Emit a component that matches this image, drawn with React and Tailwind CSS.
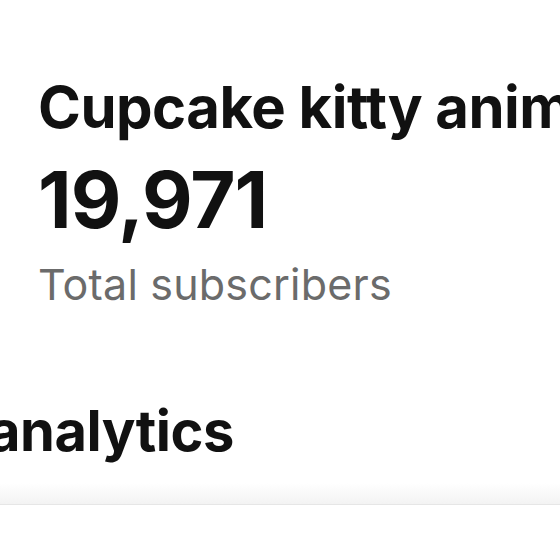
import React from "react";

const App = () => {
  return (
    <div
      className="w-[560px] h-[560px] overflow-hidden bg-white text-[#111]"
      style={{ fontFamily: "Inter, 'Noto Sans', sans-serif" }}
    >
      <div className="pl-[38px] pt-[72px] whitespace-nowrap">
        <h1 className="text-[58px] font-bold leading-[70px] tracking-[-0.5px]">
          Cupcake kitty animations
        </h1>
        <div className="text-[78px] font-bold leading-[84px] mt-[16px] tracking-[-1px]">
          19,971
        </div>
        <div className="text-[43px] leading-[50px] text-[#6b6b6b] mt-[17px] tracking-[0.2px]">
          Total subscribers
        </div>
      </div>

      {/* analytics header */}
      <div className="mt-[88px] whitespace-nowrap">
        <h2 className="text-[56px] font-bold leading-[68px] -ml-[12px] tracking-[-0.5px]">
          analytics
        </h2>
        <div className="mt-[18px] h-[22px] bg-gradient-to-b from-white to-[#f3f3f3] border-b border-[#e6e6e6]" />
      </div>
    </div>
  );
};

export default App;
